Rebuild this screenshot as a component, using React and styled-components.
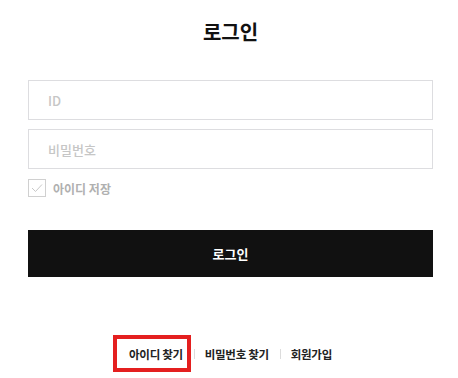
import React from "react";
import styled, { createGlobalStyle } from "styled-components";

const Global = createGlobalStyle`
  html, body { margin: 0; padding: 0; background: #fff; }
  body { font-family: "Noto Sans CJK KR", "Noto Sans", sans-serif; }
  * { box-sizing: border-box; }
`;

const Page = styled.div`
  width: 458px;
  height: 378px;
  padding: 0 25px 0 28px;
  display: flex;
  flex-direction: column;
`;

const Title = styled.h1`
  margin: 17px 0 0;
  height: 30px;
  line-height: 30px;
  text-align: center;
  font-size: 20px;
  font-weight: 700;
  color: #111;
`;

const Form = styled.form`
  margin-top: 33px;
  display: flex;
  flex-direction: column;
`;

const Field = styled.input`
  width: 405px;
  height: 40px;
  border: 1px solid #dddde0;
  padding: 0 19px;
  font-family: inherit;
  font-size: 13px;
  font-weight: 500;
  color: #222;
  outline: none;
  margin-bottom: ${(p) => p.$gap || 0}px;
  &::placeholder { color: #c6c6c6; }
`;

const SaveRow = styled.label`
  margin-top: 10px;
  display: flex;
  align-items: center;
  gap: 7px;
  height: 18px;
  font-size: 12px;
  font-weight: 700;
  color: #b0b0b0;
`;

const Box = styled.span`
  width: 18px;
  height: 18px;
  border: 1px solid #d0d0d0;
  display: flex;
  align-items: center;
  justify-content: center;
`;

const Submit = styled.button`
  margin-top: 33px;
  width: 405px;
  height: 47px;
  border: none;
  background: #111111;
  color: #fff;
  font-family: inherit;
  font-size: 13px;
  font-weight: 700;
  padding: 0;
`;

const Links = styled.nav`
  margin-top: 67px;
  display: flex;
  justify-content: center;
  align-items: center;
  height: 20px;
`;

const LinkItem = styled.a`
  position: relative;
  font-size: 11.5px;
  letter-spacing: -0.3px;
  font-weight: 700;
  color: #222;
  text-decoration: none;
  line-height: 20px;
  white-space: nowrap;
  ${(p) =>
    p.$highlight &&
    `
    &::after {
      content: "";
      position: absolute;
      left: -16px;
      right: -8px;
      top: -9px;
      bottom: -8px;
      border: 4px solid #e41f1f;
    }
  `}
`;

const Sep = styled.span`
  width: 1px;
  height: 10px;
  background: #dcdcdc;
  margin: 0 10px 0 11px;
`;

export default function App() {
  return (
    <Page>
      <Global />
      <Title>로그인</Title>
      <Form onSubmit={(e) => e.preventDefault()}>
        <Field placeholder="ID" $gap={9} />
        <Field placeholder="비밀번호" type="password" />
        <SaveRow>
          <Box>
            <svg width="12" height="10" viewBox="0 0 12 10">
              <path d="M1 5 L4.5 8.5 L11 1.5" fill="none" stroke="#c8c8c8" strokeWidth="1" />
            </svg>
          </Box>
          아이디 저장
        </SaveRow>
        <Submit type="submit">로그인</Submit>
      </Form>
      <Links>
        <LinkItem href="#" $highlight>아이디 찾기</LinkItem>
        <Sep />
        <LinkItem href="#">비밀번호 찾기</LinkItem>
        <Sep />
        <LinkItem href="#">회원가입</LinkItem>
      </Links>
    </Page>
  );
}
